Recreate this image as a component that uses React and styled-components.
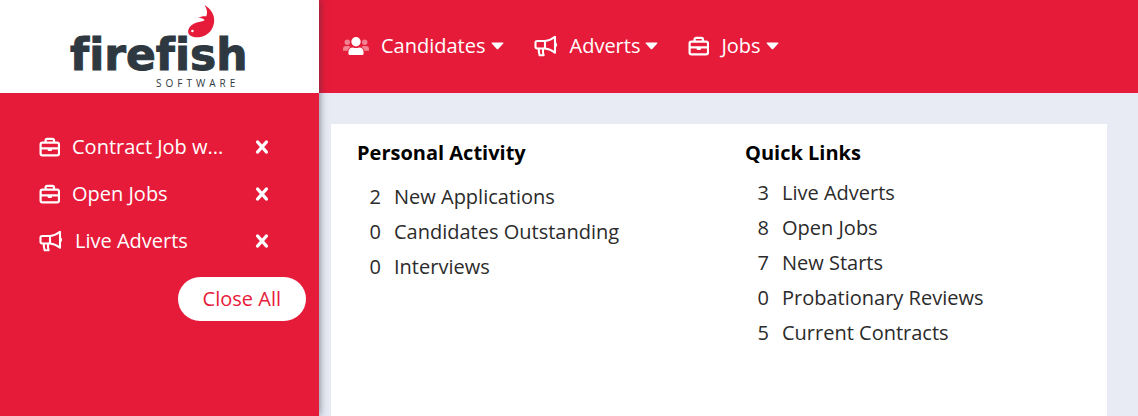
import React from "react";
import styled, { createGlobalStyle } from "styled-components";

const red = "#e61b39";

const GlobalStyle = createGlobalStyle`
  *, *::before, *::after { box-sizing: border-box; }
  body {
    margin: 0;
    background: #e8ebf4;
    color: #2b2b2b;
    font-family: "Open Sans", sans-serif;
    font-size: 20px;
    line-height: 28px;
  }
  button { font: inherit; border: 0; cursor: pointer; }
  ul { list-style: none; margin: 0; padding: 0; }
  a { color: inherit; text-decoration: none; }
`;

const Page = styled.div`
  display: flex;
  min-height: 100vh;
`;

const Sidebar = styled.aside`
  position: relative;
  flex: 0 0 319px;
  background: ${red};
  color: #fff;
  box-shadow: 0 0 8px rgba(40, 50, 70, 0.65);
`;

const Brand = styled.a`
  position: relative;
  display: flex;
  flex-direction: column;
  height: 93px;
  padding: 33px 0 0 70px;
  background: #fff;
  color: #2e3841;
`;

const BrandName = styled.span`
  font: bold 44px/44px "DejaVu Sans", sans-serif;
  font-variant-ligatures: none;
  -webkit-text-stroke: 1px currentColor;
`;

const BrandSub = styled.span`
  padding-left: 86px;
  font: 500 10px/12px "Open Sans", sans-serif;
  letter-spacing: 4px;
`;

const Fish = styled.svg`
  position: absolute;
  left: 187px;
  top: 4px;
`;

const TabList = styled.ul`
  display: flex;
  flex-direction: column;
  gap: 19px;
  padding: 40px 50px 0 39px;
`;

const Tab = styled.li`
  display: flex;
  align-items: center;
  justify-content: space-between;
`;

const TabLink = styled.a`
  display: flex;
  align-items: center;
  gap: 12px;
  white-space: nowrap;
`;

const CloseButton = styled.button`
  display: flex;
  padding: 0;
  background: none;
  color: #fff;
`;

const SidebarFooter = styled.div`
  display: flex;
  justify-content: flex-end;
  padding: 22px 13px;
`;

const CloseAll = styled.button`
  padding: 8px 25px;
  border-radius: 22px;
  background: #fff;
  color: ${red};
`;

const Content = styled.div`
  flex: 1;
  min-width: 0;
  display: flex;
  flex-direction: column;
`;

const Nav = styled.nav`
  display: flex;
  align-items: center;
  gap: 30px;
  height: 93px;
  padding: 0 0 2px 24px;
  background: ${red};
`;

const NavButton = styled.button`
  display: flex;
  align-items: center;
  padding: 0;
  background: none;
  color: #fff;
`;

const NavLabel = styled.span`
  margin: 0 5px 0 12px;
`;

const Card = styled.main`
  flex: 1;
  display: grid;
  grid-template-columns: 1fr 1fr;
  margin: 31px 31px 0 12px;
  background: #fff;
`;

const Panel = styled.section`
  padding: 15px 0 24px 26px;
`;

const PanelTitle = styled.h2`
  margin: 0;
  color: #000;
  font-size: 20px;
  line-height: 28px;
`;

const StatList = styled.ul`
  padding-top: ${(p) => (p.$spaced ? 12 : 8)}px;
`;

const Stat = styled.a`
  display: flex;
  gap: 13px;
  line-height: 35px;
`;

const Count = styled.span`
  width: 24px;
  text-align: right;
`;

const Briefcase = () => (
  <svg width="21" height="20" viewBox="0 0 21 20" fill="none" stroke="currentColor" strokeWidth="2.2" aria-hidden="true">
    <rect x="1.6" y="5.6" width="18.4" height="12.8" rx="1.8" />
    <path d="M6.600 5.500V3.400q0-1.600 1.600-1.600h5.200q1.600 0 1.600 1.600v2.100M1.600 11.400h18.400" />
    <path d="M8.600 11.500h4.400v1.200q0 1.300-1.200 1.300H9.800q-1.200 0-1.200-1.300z" fill="currentColor" stroke="none" />
  </svg>
);

const Megaphone = () => (
  <svg width="24" height="22" viewBox="0 0 24 22" fill="none" stroke="currentColor" strokeWidth="2.1" strokeLinejoin="round" strokeLinecap="round" aria-hidden="true">
    <path d="M11 6H3.200Q1.500 6 1.500 7.700v4.100q0 1.700 1.700 1.700H11zM11 6q5.600-.6 10-4.200v16q-4.400-3.700-10-4.300" />
    <path d="M4.800 13.700q-.2 3.600.9 6.600H9.600q-1.200-2.600-.4-6.600" />
    <path d="M22 8q1.400 1.800 0 3.600z" fill="currentColor" strokeWidth="1" />
  </svg>
);

const People = () => (
  <svg width="26" height="20" viewBox="0 0 26 20" fill="currentColor" aria-hidden="true">
    <g opacity=".45">
      <circle cx="4.300" cy="6.200" r="2.700" />
      <circle cx="21.700" cy="6.200" r="2.700" />
      <path d="M0 14.800V13q0-3 3-3h2.600q1.300 0 2 .8-2.400 1.300-3 4zM26 14.800V13q0-3-3-3h-2.600q-1.300 0-2 .8 2.400 1.300 3 4z" />
    </g>
    <circle cx="13" cy="5.800" r="4.700" />
    <path d="M5.400 17.600v-1.200q0-4.900 4.600-4.900 3 1.100 6 0 4.600 0 4.600 4.900v1.200q0 1.500-1.500 1.500H6.900q-1.500 0-1.500-1.500z" />
  </svg>
);

const Caret = () => (
  <svg width="13" height="8" viewBox="0 0 13 8" fill="currentColor" aria-hidden="true">
    <path d="M1.200.5h10.600q1.100 0 .4 1L7.500 6.800q-1 1-2 0L.8 1.500q-.7-1 .4-1z" />
  </svg>
);

const Cross = () => (
  <svg width="14" height="16" viewBox="0 0 14 16" fill="none" stroke="currentColor" strokeWidth="3.400" strokeLinecap="round" aria-hidden="true">
    <path d="M2.600 3l8.800 10M11.400 3l-8.800 10" />
  </svg>
);

const tabs = [
  { label: "Contract Job w...", Icon: Briefcase },
  { label: "Open Jobs", Icon: Briefcase },
  { label: "Live Adverts", Icon: Megaphone },
];

const menus = [
  { label: "Candidates", Icon: People },
  { label: "Adverts", Icon: Megaphone },
  { label: "Jobs", Icon: Briefcase },
];

const panels = [
  {
    title: "Personal Activity",
    spaced: true,
    stats: [[2, "New Applications"], [0, "Candidates Outstanding"], [0, "Interviews"]],
  },
  {
    title: "Quick Links",
    stats: [[3, "Live Adverts"], [8, "Open Jobs"], [7, "New Starts"], [0, "Probationary Reviews"], [5, "Current Contracts"]],
  },
];

export default function App() {
  return (
    <Page>
      <GlobalStyle />
      <Sidebar>
        <Brand href="#">
          <Fish width="28" height="34" viewBox="0 0 28 34" aria-hidden="true">
            <path
              fill={red}
              d="M17.500 1C23.500 4.500 27.300 10 27.200 16.500 27 25 21.500 31.500 13.500 33 7 34 1.800 32 1.200 28.500.7 24.500 4 20.500 9 18.800c4-1.300 7-1.200 8.800-2.800-2-1.600-4-2.200-7-2.200 3.200-1.600 6-1.900 8.600-1.500C20.600 8.800 20.200 5 17.500 1z"
            />
            <circle cx="5.400" cy="27" r="1.300" fill="#fff" />
          </Fish>
          <BrandName>firefish</BrandName>
          <BrandSub>SOFTWARE</BrandSub>
        </Brand>
        <TabList>
          {tabs.map(({ label, Icon }) => (
            <Tab key={label}>
              <TabLink href="#"><Icon />{label}</TabLink>
              <CloseButton aria-label={`Close ${label}`}><Cross /></CloseButton>
            </Tab>
          ))}
        </TabList>
        <SidebarFooter>
          <CloseAll>Close All</CloseAll>
        </SidebarFooter>
      </Sidebar>
      <Content>
        <Nav>
          {menus.map(({ label, Icon }) => (
            <NavButton key={label}>
              <Icon />
              <NavLabel>{label}</NavLabel>
              <Caret />
            </NavButton>
          ))}
        </Nav>
        <Card>
          {panels.map(({ title, spaced, stats }) => (
            <Panel key={title}>
              <PanelTitle>{title}</PanelTitle>
              <StatList $spaced={spaced}>
                {stats.map(([count, label]) => (
                  <li key={label}>
                    <Stat href="#"><Count>{count}</Count><span>{label}</span></Stat>
                  </li>
                ))}
              </StatList>
            </Panel>
          ))}
        </Card>
      </Content>
    </Page>
  );
}
